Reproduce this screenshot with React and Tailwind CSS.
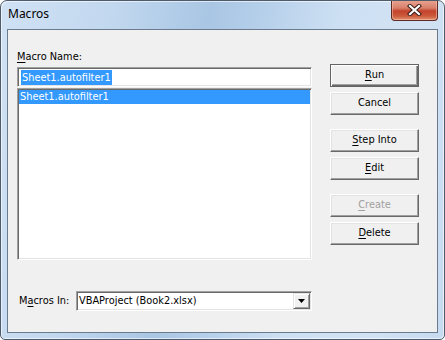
import React from "react";

const sunken =
  "border border-t-[#a0a0a0] border-l-[#a0a0a0] border-r-white border-b-white shadow-[inset_1px_1px_0_#696969,inset_-1px_-1px_0_#e3e3e3]";

function Btn({ children, def, disabled, className = "" }) {
  const base = def
    ? "border border-[#646464] shadow-[inset_1px_1px_0_#ffffff,inset_-1px_-1px_0_#696969,inset_-2px_-2px_0_#a0a0a0]"
    : "border border-t-white border-l-white border-r-[#696969] border-b-[#696969] shadow-[inset_-1px_-1px_0_#a0a0a0,inset_1px_1px_0_#e3e3e3]";
  return (
    <div
      className={`w-[89px] h-[23px] bg-[#f0f0f0] flex items-center justify-center ${base} ${
        disabled ? "text-[#a0a0a0]" : "text-black"
      } ${className}`}
    >
      {children}
    </div>
  );
}

export default function App() {
  return (
    <div
      className="w-[445px] h-[340px] border border-[#4e5b6b] rounded-t-[7px] rounded-b-[5px] overflow-hidden flex flex-col shadow-[inset_1px_1px_0_rgba(255,255,255,0.6),inset_-1px_-1px_0_rgba(255,255,255,0.6)]"
      style={{
        background:
          "linear-gradient(100deg, #d0e1f4 0%, #c2d8ef 22%, #a9c6e4 42%, #b5cfea 52%, #cde0f3 68%, #d2e2f4 85%, #c6daf0 100%)",
        fontFamily: '"DejaVu Sans", sans-serif',
        fontSize: "9.8px",
      }}
    >
      {/* Title bar */}
      <div className="h-[28px] flex items-start justify-between shrink-0">
        <div
          className="pl-[7px] pt-[5px] text-[12px] text-black leading-[16px]"
          style={{ fontFamily: '"Noto Sans", "Open Sans", sans-serif' }}
        >
          Macros
        </div>
        <div
          className="mr-[6px] -mt-[1px] w-[47px] h-[21px] rounded-b-[4px] border border-[#5e2a22] border-t-0 flex items-center justify-center shadow-[inset_0_0_0_1px_rgba(255,200,190,0.5)]"
          style={{
            background:
              "linear-gradient(180deg, #e9a593 0%, #d8806b 40%, #c2432b 55%, #cc5a3c 80%, #e0936d 100%)",
          }}
        >
          <svg width="15" height="12" viewBox="0 0 15 12">
            <path
              d="M3 2 L12 10 M12 2 L3 10"
              stroke="#3b1d18"
              strokeWidth="4.2"
              strokeLinecap="square"
            />
            <path
              d="M3 2 L12 10 M12 2 L3 10"
              stroke="#ffffff"
              strokeWidth="2.2"
              strokeLinecap="square"
            />
          </svg>
        </div>
      </div>

      {/* Client area */}
      <div className="ml-[6px] w-[431px] h-[304px] border border-[#6b7b8e] bg-[#f0f0f0] flex text-black">
        {/* Left column */}
        <div className="ml-[9px] w-[295px] pt-[20px] flex flex-col">
          <div className="h-[13px] leading-[13px] pl-[0px]">
            <span className="underline underline-offset-[2px]">M</span>acro Name:
          </div>
          <div className={`mt-[4px] h-[20px] bg-white flex items-center pl-[3px] ${sunken}`}>
            <span className="bg-[#3399ff] text-white leading-[15px] h-[15px] pl-[1px] pr-[1px]">
              Sheet1.autofilter1
            </span>
          </div>
          <div className={`mt-[1px] h-[172px] bg-white ${sunken} p-[1px] pt-[1px]`}>
            <div className="bg-[#3399ff] text-white h-[14px] leading-[14px] pl-[1px]">
              Sheet1.autofilter1
            </div>
          </div>
          <div className="mt-[31px] h-[20px] flex items-center">
            <div className="w-[59px] pl-[2px]">
              M<span className="underline underline-offset-[2px]">a</span>cros In:
            </div>
            <div className={`w-[236px] h-[20px] bg-white flex items-center justify-between ${sunken}`}>
              <span className="pl-[2px]">VBAProject (Book2.xlsx)</span>
              <div className="w-[17px] h-[16px] mr-[1px] bg-[#f0f0f0] border border-t-[#e3e3e3] border-l-[#e3e3e3] border-r-[#696969] border-b-[#696969] shadow-[inset_1px_1px_0_#ffffff,inset_-1px_-1px_0_#a0a0a0] flex items-center justify-center">
                <svg width="7" height="4" viewBox="0 0 7 4">
                  <path d="M0 0 H7 L3.5 4 Z" fill="#000" />
                </svg>
              </div>
            </div>
          </div>
        </div>

        {/* Right column */}
        <div className="ml-[18px] pt-[34px] flex flex-col">
          <Btn def>
            <span className="underline underline-offset-[2px]">R</span>un
          </Btn>
          <Btn className="mt-[5px]">Cancel</Btn>
          <Btn className="mt-[14px]">
            <span className="underline underline-offset-[2px]">S</span>tep Into
          </Btn>
          <Btn className="mt-[5px]">
            <span className="underline underline-offset-[2px]">E</span>dit
          </Btn>
          <Btn className="mt-[14px]" disabled>
            <span className="underline underline-offset-[2px]">C</span>reate
          </Btn>
          <Btn className="mt-[5px]">
            <span className="underline underline-offset-[2px]">D</span>elete
          </Btn>
        </div>
      </div>
    </div>
  );
}
